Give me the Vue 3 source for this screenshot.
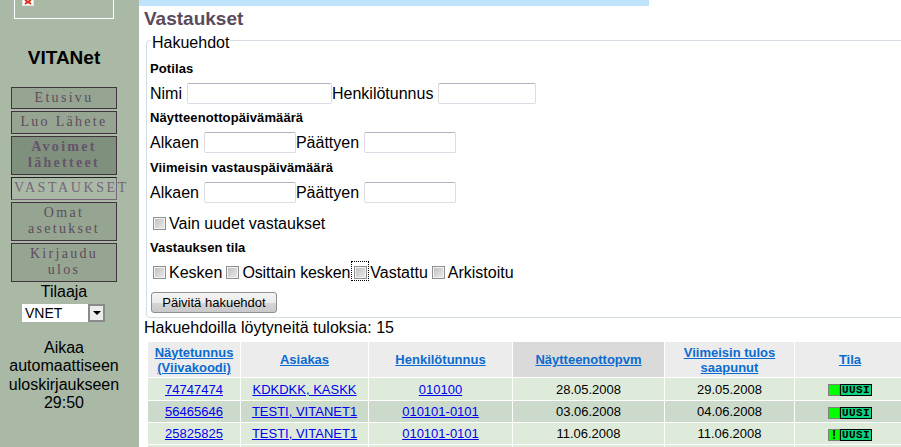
<script setup>
const menu = [
  { label: 'Etusivu', cls: 'plain short' },
  { label: 'Luo Lähete', cls: 'plain' },
  { label: 'Avoimet lähetteet', cls: 'dark' },
  { label: 'VASTAUKSET', cls: 'current' },
  { label: 'Omat asetukset', cls: 'plain' },
  { label: 'Kirjaudu ulos', cls: 'plain' }
]

const columns = [
  { label: 'Näytetunnus (Viivakoodi)', width: 92 },
  { label: 'Asiakas', width: 127 },
  { label: 'Henkilötunnus', width: 143 },
  { label: 'Näytteenottopvm', width: 151, sorted: true },
  { label: 'Viimeisin tulos saapunut', width: 129 },
  { label: 'Tila', width: 110 }
]

const rows = [
  { code: '74747474', name: 'KDKDKK, KASKK', hetu: '010100', taken: '28.05.2008', last: '29.05.2008' },
  { code: '56465646', name: 'TESTI, VITANET1', hetu: '010101-0101', taken: '03.06.2008', last: '04.06.2008' },
  { code: '25825825', name: 'TESTI, VITANET1', hetu: '010101-0101', taken: '11.06.2008', last: '11.06.2008', alert: true }
]
</script>

<template>
  <div class="page">
    <aside class="side">
      <div class="logo">
        <svg class="broken" width="12" height="6" viewBox="0 0 12 6">
          <rect x="0" y="-6" width="12" height="12" fill="#fff" stroke="#c8c8c8" />
          <path d="M3 0l6 4M9 0L3 4" stroke="#d8321e" stroke-width="2" />
        </svg>
      </div>
      <div class="brand">VITANet</div>
      <nav class="menu">
        <a v-for="m in menu" :key="m.label" class="item" :class="m.cls">{{ m.label }}</a>
      </nav>
      <div class="sub">Tilaaja</div>
      <div class="select">
        <span class="sel-val">VNET</span>
        <span class="sel-btn"><i></i></span>
      </div>
      <div class="timer">Aikaa automaattiseen uloskirjaukseen 29:50</div>
    </aside>

    <main class="main">
      <div class="topbar"></div>
      <h1>Vastaukset</h1>
      <fieldset class="search">
        <legend>Hakuehdot</legend>
        <h2 class="first">Potilas</h2>
        <div class="line">
          <span class="lbl">Nimi</span><input class="name" type="text" />
          <span class="lbl">Henkilötunnus</span><input class="hetu" type="text" />
        </div>
        <h2>Näytteenottopäivämäärä</h2>
        <div class="line">
          <span class="lbl">Alkaen</span><input class="date" type="text" />
          <span class="lbl">Päättyen</span><input class="date" type="text" />
        </div>
        <h2 class="third">Viimeisin vastauspäivämäärä</h2>
        <div class="line">
          <span class="lbl">Alkaen</span><input class="date" type="text" />
          <span class="lbl">Päättyen</span><input class="date" type="text" />
        </div>
        <div class="line checks solo">
          <span class="cb"></span><span class="lbl">Vain uudet vastaukset</span>
        </div>
        <h2>Vastauksen tila</h2>
        <div class="line checks">
          <span class="cb"></span><span class="lbl">Kesken</span>
          <span class="cb"></span><span class="lbl narrow">Osittain kesken</span>
          <span class="cb focus"></span><span class="lbl">Vastattu</span>
          <span class="cb"></span><span class="lbl">Arkistoitu</span>
        </div>
        <button class="update" type="button">Päivitä hakuehdot</button>
      </fieldset>
      <div class="count">Hakuehdoilla löytyneitä tuloksia: 15</div>
      <table class="results">
        <colgroup>
          <col v-for="c in columns" :key="c.label" :style="{ width: c.width + 'px' }" />
        </colgroup>
        <thead>
          <tr>
            <th v-for="c in columns" :key="c.label" :class="{ sorted: c.sorted }"><a>{{ c.label }}</a></th>
          </tr>
        </thead>
        <tbody>
          <tr v-for="r in rows" :key="r.code">
            <td><a>{{ r.code }}</a></td>
            <td><a>{{ r.name }}</a></td>
            <td><a>{{ r.hetu }}</a></td>
            <td>{{ r.taken }}</td>
            <td>{{ r.last }}</td>
            <td>
              <span class="status">
                <span class="light">{{ r.alert ? '!' : '' }}</span><span class="uusi">UUSI</span>
              </span>
            </td>
          </tr>
          <tr><td v-for="c in columns" :key="c.label">&nbsp;</td></tr>
        </tbody>
      </table>
    </main>
  </div>
</template>

<style>
html, body { margin: 0; overflow: hidden; background: #fff; }
</style>

<style scoped>
.page {
  display: flex;
  height: 447px;
  overflow: hidden;
  font: 16px/18px "Liberation Sans", Arial, sans-serif;
  color: #000;
}

.side {
  box-sizing: border-box;
  width: 139px;
  flex: none;
  padding-right: 11px;
  background: #a9b9a6;
  text-align: center;
}
.logo {
  box-sizing: border-box;
  width: 100px;
  height: 19px;
  margin-left: 14px;
  border: 1px solid #fff;
  border-top: 0;
}
.broken { display: block; margin-left: 7px; }
.brand {
  margin-top: 28px;
  font-size: 19px;
  line-height: 21px;
  font-weight: bold;
}
.menu {
  display: flex;
  flex-direction: column;
  gap: 2px;
  width: 106px;
  margin: 19px 0 0 11px;
}
.item {
  box-sizing: border-box;
  display: block;
  border: 1px solid #3f343f;
  padding: 2px 4px 3px;
  font: 14px/16px "Liberation Serif", "Times New Roman", serif;
  letter-spacing: 2.3px;
  color: #5d4c5d;
}
.plain { background: #95a591; }
.short { padding-bottom: 2px; }
.dark { background: #7f907c; font-weight: bold; color: #65546b; }
.current {
  padding-left: 2px;
  padding-right: 0;
  white-space: nowrap;
  text-align: left;
  letter-spacing: 2.6px;
  color: #76667a;
  border-color: #76667a;
  border-left-color: #222;
  border-top-color: #222;
}
.sub { margin-top: 1px; line-height: 18px; }
.select {
  display: flex;
  box-sizing: border-box;
  width: 83px;
  height: 18px;
  margin: 3px 0 0 22px;
  background: #fff;
  font-size: 14px;
  line-height: 18px;
  text-align: left;
}
.sel-val { flex: 1; padding-left: 3px; }
.sel-btn {
  display: flex;
  align-items: center;
  justify-content: center;
  width: 17px;
  background: #ececec;
  border: 2px solid #8a8a8a;
  box-sizing: border-box;
}
.sel-btn i {
  border: 4px solid transparent;
  border-top: 4px solid #000;
  border-bottom: 0;
}
.timer {
  margin-top: 17px;
  line-height: 18.4px;
}

.main { flex: 1; min-width: 0; }
.topbar { width: 510px; height: 6px; background: #bfe3fb; }
h1 {
  margin: 2px 0 0 5px;
  font-size: 19px;
  line-height: 21px;
  font-weight: bold;
  color: #5b4a5b;
}
.search {
  box-sizing: border-box;
  width: 770px;
  margin: 0 0 0 7px;
  padding: 0 0 4px 3px;
  border: 1px solid #d3dce3;
  border-radius: 4px;
}
legend {
  padding: 5px 1px 0;
  margin-left: 1px;
  font-size: 16px;
  line-height: 18px;
}
h2 {
  margin: 6px 0 0;
  font-size: 13px;
  line-height: 15px;
  font-weight: bold;
  letter-spacing: .1px;
}
h2.first { margin-top: 9px; }
h2.third { margin-top: 7px; }
.line {
  display: flex;
  align-items: center;
  height: 21px;
  margin-top: 7px;
}
.lbl { white-space: nowrap; }
.narrow { letter-spacing: -.1px; }
input {
  box-sizing: border-box;
  height: 21px;
  margin: 0 0 0 5px;
  padding: 0;
  background: #fff;
  border: 1px solid #dcdce4;
  border-top-color: #b4b4bc;
  border-radius: 2px;
  outline: 0;
}
.name { width: 145px; }
.hetu { width: 98px; }
.date { width: 92px; }
.checks { margin-left: 3px; }
.solo { margin-top: 10px; }
.cb {
  position: relative;
  box-sizing: border-box;
  width: 13px;
  height: 13px;
  flex: none;
  margin-right: 3px;
  border: 1px solid #8e8f8f;
  background: linear-gradient(135deg, #bdbdbd, #ececec);
  box-shadow: inset 0 0 0 1px #f2f2f2;
}
.lbl + .cb { margin-left: 4px; }
.focus::after {
  content: "";
  position: absolute;
  left: -4px;
  top: -6px;
  box-sizing: border-box;
  width: 18px;
  height: 20px;
  border: 1px dotted #000;
}
.update {
  display: block;
  box-sizing: border-box;
  width: 126px;
  height: 21px;
  margin: 9px 0 0 1px;
  padding: 0;
  border: 1px solid #8f8f8f;
  border-radius: 3px;
  background: linear-gradient(#f4f4f4 0%, #ebebeb 50%, #d6d6d6 51%, #c9c9c9 100%);
  font: 13px "Liberation Sans", Arial, sans-serif;
  color: #000;
}
.count { margin: 1px 0 0 5px; height: 22px; }
.results {
  table-layout: fixed;
  width: 759px;
  margin-left: 8px;
  border-collapse: separate;
  border-spacing: 1px;
  font-size: 13px;
  line-height: 15px;
  text-align: center;
}
.results th {
  height: 35px;
  padding: 0;
  background: #ececec;
  font-weight: bold;
}
.results th.sorted { background: #dadada; }
.results th a { color: #0b6bd0; text-decoration: underline; }
.results td {
  height: 21px;
  padding: 0;
  background: #deebdb;
}
.results tbody tr:first-child td { height: 22px; }
.results tbody tr:nth-child(2) td { background: #cbdaca; }
.results td a { color: #0000ee; text-decoration: underline; }
.status { display: inline-flex; vertical-align: middle; height: 12px; }
.light {
  box-sizing: border-box;
  width: 12px;
  height: 12px;
  background: #00ff00;
  border: 1px solid #808080;
  font: bold 12px/10px "Liberation Sans", sans-serif;
  color: #000;
  text-align: center;
}
.uusi {
  box-sizing: border-box;
  width: 32px;
  height: 12px;
  padding-left: 1px;
  background: #0cd47c;
  border: 1px solid #000;
  font: bold 11px/10px "Liberation Mono", monospace;
  color: #000;
  letter-spacing: .4px;
  text-align: left;
}
</style>
